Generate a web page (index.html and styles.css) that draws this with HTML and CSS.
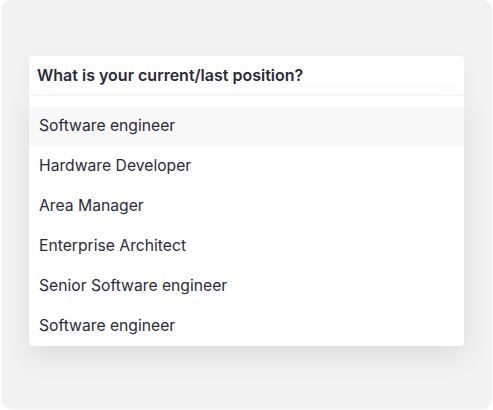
FILE: index.html
```html
<!DOCTYPE html>
<html>
  <head>
    <meta charset="utf-8">
    <title>Position select</title>
    <link rel="stylesheet" href="styles.css">
  </head>
  <body>
    <div class="panel">
      <div class="select-box">
        <div class="select-label">What is your current/last position?</div>
        <ul class="options">
          <li class="option is-active">Software engineer</li>
          <li class="option">Hardware Developer</li>
          <li class="option">Area Manager</li>
          <li class="option">Enterprise Architect</li>
          <li class="option">Senior Software engineer</li>
          <li class="option">Software engineer</li>
        </ul>
      </div>
    </div>
  </body>
</html>
```

FILE: styles.css
```css
body{margin:0;padding:0;background:#fff;font-family:Inter,'Noto Sans',sans-serif;color:#2a2b3a}
*{box-sizing:border-box}
.panel{width:491px;height:409px;margin-left:1px;padding:56px 28px 0;background:#f2f2f2;border-radius:10px}
.select-box{display:flex;flex-direction:column}
.select-label{height:39px;display:flex;align-items:center;padding:0 8px 1px;background:#fff;border-radius:4px 4px 0 0;
  font-size:16px;font-weight:600;box-shadow:0 4px 16px rgba(0,0,0,0.04)}
.options{list-style:none;margin:0;padding:10px 0 0;background:#fff;border-top:1px solid #f3f3f3;border-radius:0 0 4px 4px;
  box-shadow:0 10px 28px rgba(0,0,0,0.09)}
.option{height:40px;display:flex;align-items:center;padding:0 10px 1px;font-size:15.7px}
.option.is-active{background:#f8f8f8}
```
